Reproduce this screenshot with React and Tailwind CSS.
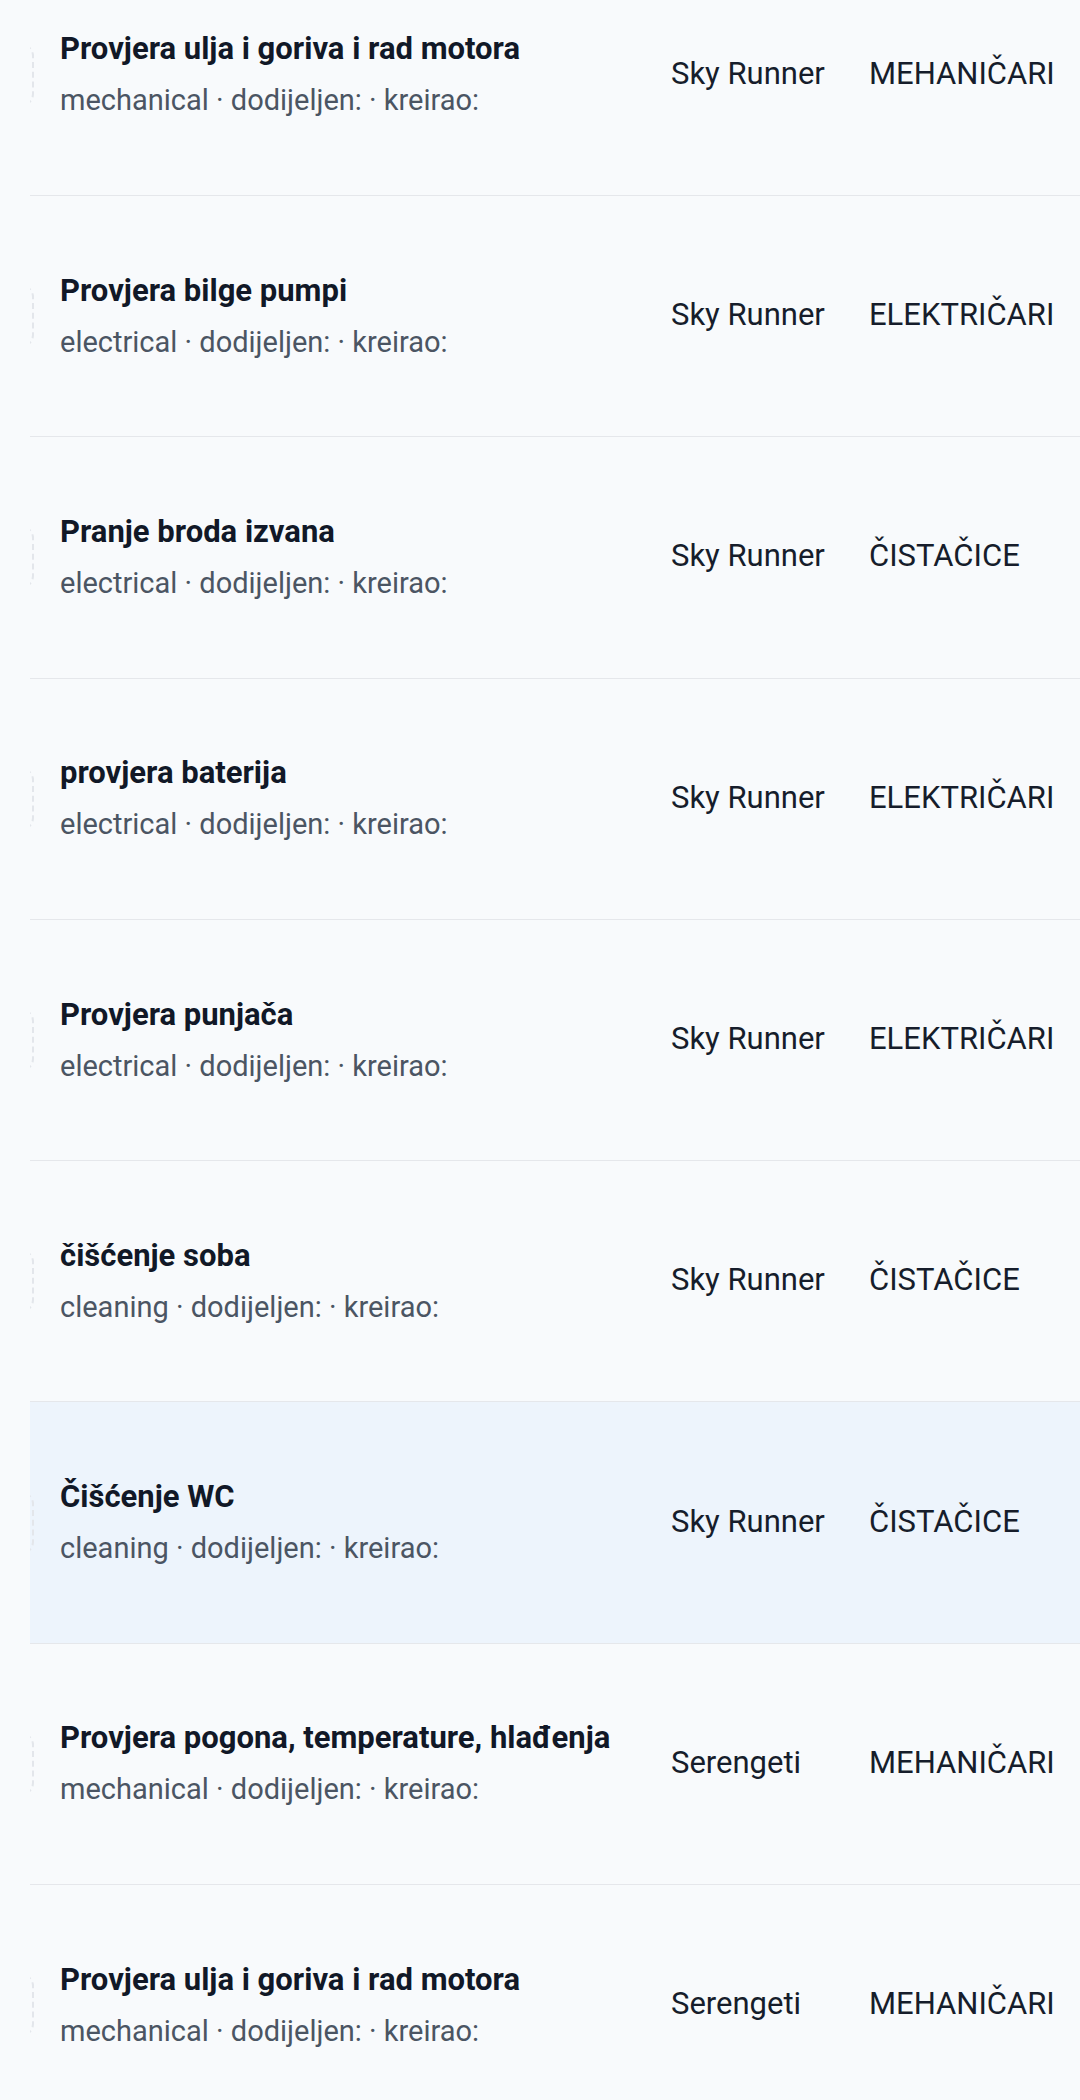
const tasks = [
  { title: 'Provjera ulja i goriva i rad motora', type: 'mechanical', vessel: 'Sky Runner', team: 'MEHANIČARI' },
  { title: 'Provjera bilge pumpi', type: 'electrical', vessel: 'Sky Runner', team: 'ELEKTRIČARI' },
  { title: 'Pranje broda izvana', type: 'electrical', vessel: 'Sky Runner', team: 'ČISTAČICE' },
  { title: 'provjera baterija', type: 'electrical', vessel: 'Sky Runner', team: 'ELEKTRIČARI' },
  { title: 'Provjera punjača', type: 'electrical', vessel: 'Sky Runner', team: 'ELEKTRIČARI' },
  { title: 'čišćenje soba', type: 'cleaning', vessel: 'Sky Runner', team: 'ČISTAČICE' },
  { title: 'Čišćenje WC', type: 'cleaning', vessel: 'Sky Runner', team: 'ČISTAČICE', active: true },
  { title: 'Provjera pogona, temperature, hlađenja', type: 'mechanical', vessel: 'Serengeti', team: 'MEHANIČARI' },
  { title: 'Provjera ulja i goriva i rad motora', type: 'mechanical', vessel: 'Serengeti', team: 'MEHANIČARI' },
]

function TaskRow({ task }) {
  return (
    <div
      className={`h-[241.3px] flex items-center overflow-hidden border-b border-[#e5e7eb] ${
        task.active ? 'bg-[#edf4fc] border-[#dfe5ec]' : ''
      }`}
    >
      {/* drag handle, mostly scrolled out of view */}
      <div className="shrink-0 w-[40px] h-[62px] -ml-[36px] mr-[26px] rounded-[12px] border-2 border-dashed border-[#e3e6eb]" />

      <div className="w-[611px] shrink-0 min-w-0">
        <p className="text-[31px] leading-[40px] font-bold text-[#111827] whitespace-nowrap">{task.title}</p>
        <p className="mt-[11px] text-[29px] leading-[40px] text-[#4b5563] whitespace-nowrap">
          {task.type} · dodijeljen: · kreirao:
        </p>
      </div>

      <div className="w-[198px] shrink-0 mb-[2px] text-[31px] leading-[40px] text-[#161d2b] whitespace-nowrap">{task.vessel}</div>
      <div className="shrink-0 mb-[2px] text-[31px] leading-[40px] text-[#161d2b] whitespace-nowrap">{task.team}</div>
    </div>
  )
}

export default function App() {
  return (
    <div
      className="w-[1080px] h-[2100px] overflow-hidden bg-[#f8fafc]"
      style={{ fontFamily: 'Roboto, "Noto Sans", sans-serif' }}
    >
      <div className="ml-[30px] -mt-[45.3px]">
        {tasks.map((task, i) => (
          <TaskRow key={i} task={task} />
        ))}
      </div>
    </div>
  )
}
